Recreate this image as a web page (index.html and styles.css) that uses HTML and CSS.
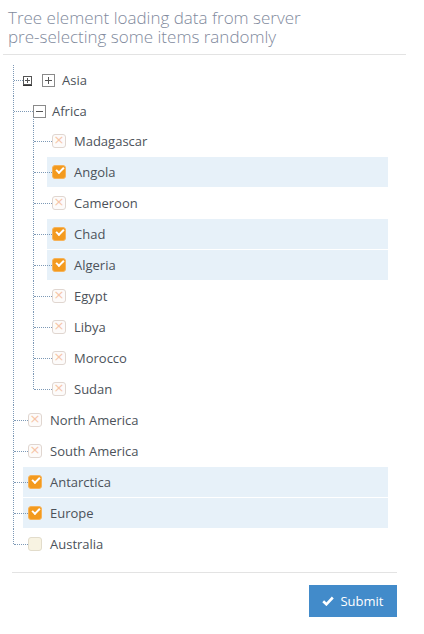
FILE: index.html
```html
<!DOCTYPE html>
<html lang="en">
<head>
    <meta charset="UTF-8">
    <meta name="viewport" content="width=device-width, initial-scale=1.0">
    <title>Tree element</title>
    <link rel="stylesheet" href="styles.css">
</head>
<body>
    <div class="page">
        <h4 class="title">Tree element loading data from server<br>pre-selecting some items randomly</h4>
        <hr class="sep">

        <ul class="tree">
            <li class="closed">
                <div class="row">
                    <svg class="toggle" width="9" height="10" viewBox="0 0 9 10"><rect x="0.5" y="0.5" width="8" height="8" fill="#fff" stroke="#555"/><path d="M2 4.5h5M4.5 2v5" stroke="#555"/><path d="M0 9.5h9" stroke="#333"/></svg>
                    <svg class="box" width="13" height="13" viewBox="0 0 13 13"><rect x="0.5" y="0.5" width="12" height="12" fill="#fff" stroke="#8a8a8a"/><path d="M3 6.5h7M6.5 3v7" stroke="#555"/></svg>
                    <span class="label">Asia</span>
                </div>
            </li>
            <li class="folder">
                <div class="row">
                    <svg class="box" width="13" height="13" viewBox="0 0 13 13"><rect x="0.5" y="0.5" width="12" height="12" fill="#fff" stroke="#8a8a8a"/><path d="M3 6.5h7" stroke="#555"/></svg>
                    <span class="label">Africa</span>
                </div>
                <ul class="sub">
                    <li class="leaf"><div class="row"><span class="check"></span><span class="label">Madagascar</span></div></li>
                    <li class="leaf"><div class="row selected"><span class="check on"></span><span class="label">Angola</span></div></li>
                    <li class="leaf"><div class="row"><span class="check"></span><span class="label">Cameroon</span></div></li>
                    <li class="leaf"><div class="row selected"><span class="check on"></span><span class="label">Chad</span></div></li>
                    <li class="leaf"><div class="row selected"><span class="check on"></span><span class="label">Algeria</span></div></li>
                    <li class="leaf"><div class="row"><span class="check"></span><span class="label">Egypt</span></div></li>
                    <li class="leaf"><div class="row"><span class="check"></span><span class="label">Libya</span></div></li>
                    <li class="leaf"><div class="row"><span class="check"></span><span class="label">Morocco</span></div></li>
                    <li class="leaf"><div class="row"><span class="check"></span><span class="label">Sudan</span></div></li>
                </ul>
            </li>
            <li class="leaf"><div class="row"><span class="check"></span><span class="label">North America</span></div></li>
            <li class="leaf"><div class="row"><span class="check"></span><span class="label">South America</span></div></li>
            <li class="leaf"><div class="row selected"><span class="check on"></span><span class="label">Antarctica</span></div></li>
            <li class="leaf"><div class="row selected"><span class="check on"></span><span class="label">Europe</span></div></li>
            <li class="leaf"><div class="row"><span class="check blank"></span><span class="label">Australia</span></div></li>
        </ul>

        <hr class="sep sep-bottom">
        <div class="actions">
            <button class="btn-submit">
                <svg width="12" height="10" viewBox="0 0 12 10"><path d="M1.2 5.2l3.2 3.1 6.4-6.8" fill="none" stroke="#fff" stroke-width="2.6"/></svg>
                Submit
            </button>
        </div>
    </div>
</body>
</html>
```

FILE: styles.css
```css
body {
    margin: 0;
    font-family: "Open Sans", "Liberation Sans", sans-serif;
    background-color: #fff;
}

.page {
    padding: 8px 8px 0 8px;
}

.title {
    margin: 0;
    font-size: 17px;
    font-weight: 300;
    line-height: 19px;
    color: #7f8a9d;
}

.sep {
    border: none;
    border-top: 1px solid #e3e3e3;
    margin: 8px 10px 0 -5px;
}

.sep-bottom {
    margin: 12px 19px 0 4px;
}

.tree {
    list-style: none;
    margin: 10px 28px 0 5px;
    padding: 0;
}

.tree li {
    position: relative;
    padding: 0 0 1px 10px;
}

.tree li::before {
    content: "";
    position: absolute;
    left: 0;
    top: 0;
    bottom: 0;
    border-left: 1px dotted #7d99b6;
}

.tree li:last-child::before {
    bottom: auto;
    height: 15px;
}

.tree li::after {
    content: "";
    position: absolute;
    left: 1px;
    top: 15px;
    width: 14px;
    border-top: 1px dotted #7d99b6;
}

.tree li.closed::after {
    width: 9px;
}

.tree li.folder::after {
    width: 19px;
}

.sub {
    list-style: none;
    margin: 0 0 0 10px;
    padding: 0;
    position: relative;
}

.sub::before {
    content: "";
    position: absolute;
    left: 0;
    top: -9px;
    height: 9px;
    border-left: 1px dotted #7d99b6;
}

.tree .sub li {
    padding-left: 14px;
}

.tree .sub li:last-child {
    padding-bottom: 0;
}

.tree .sub li::after {
    width: 18px;
}

.row {
    display: flex;
    align-items: center;
    height: 30px;
    padding-left: 5px;
    font-size: 13px;
    color: #4c525a;
}

.closed > .row {
    padding-left: 0;
}

.folder > .row {
    padding-left: 10px;
}

.row.selected {
    background-color: #e7f1f9;
}

.toggle {
    margin-right: 10px;
    margin-top: 1px;
}

.box {
    margin-right: 6px;
}

.closed .box {
    margin-right: 7px;
}

.check {
    width: 12px;
    height: 12px;
    border: 1px solid #e0d6d0;
    border-radius: 3px;
    margin-right: 8px;
    background-color: #fdfbfa;
    position: relative;
}

.check::after {
    content: "\00d7";
    position: absolute;
    left: 0;
    right: 0;
    top: -3px;
    text-align: center;
    font-size: 13px;
    font-family: "DejaVu Sans", sans-serif;
    color: #f6c4a8;
}

.check.blank {
    background-color: #f8f3e2;
    border-color: #e2dccb;
}

.check.blank::after {
    content: "";
}

.check.on {
    background-color: #f39a1e;
    border-color: #f6b35a;
}

.check.on::after {
    content: "";
    left: 3px;
    top: 1px;
    width: 6px;
    height: 3px;
    border-left: 2px solid #fff;
    border-bottom: 2px solid #fff;
    transform: rotate(-45deg);
    right: auto;
}

.label {
    white-space: nowrap;
}

.actions {
    display: flex;
    justify-content: flex-end;
    padding: 12px 19px 0 0;
}

.btn-submit {
    display: flex;
    align-items: center;
    gap: 6px;
    width: 88px;
    height: 32px;
    justify-content: center;
    padding: 0;
    border: none;
    background-color: #428bca;
    color: #fff;
    font-family: "Open Sans", "Liberation Sans", sans-serif;
    font-size: 13px;
}
```
